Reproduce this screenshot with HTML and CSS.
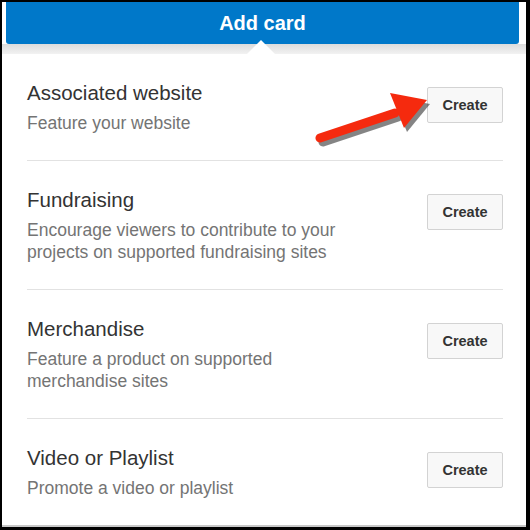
FILE: index.html
```html
<!DOCTYPE html>
<html lang="en">
<head>
    <meta charset="UTF-8">
    <title>Add card</title>
    <link rel="stylesheet" href="styles.css">
</head>
<body>
    <div class="frame">
        <div class="header">
            <h1>Add card</h1>
        </div>
        <div class="header-shadow">
            <span class="notch"></span>
        </div>

        <ul class="cards">
            <li class="card">
                <div class="card-text">
                    <div class="card-title">Associated website</div>
                    <div class="card-desc">Feature your website</div>
                </div>
                <button class="create-btn">Create</button>
            </li>
            <li class="card">
                <div class="card-text">
                    <div class="card-title">Fundraising</div>
                    <div class="card-desc">Encourage viewers to contribute to your<br>projects on supported fundraising sites</div>
                </div>
                <button class="create-btn">Create</button>
            </li>
            <li class="card">
                <div class="card-text">
                    <div class="card-title">Merchandise</div>
                    <div class="card-desc">Feature a product on supported<br>merchandise sites</div>
                </div>
                <button class="create-btn">Create</button>
            </li>
            <li class="card">
                <div class="card-text">
                    <div class="card-title">Video or Playlist</div>
                    <div class="card-desc">Promote a video or playlist</div>
                </div>
                <button class="create-btn">Create</button>
            </li>
        </ul>

        <!-- red callout arrow pointing at the first button -->
        <svg class="arrow" width="130" height="60" viewBox="0 0 130 60">
            <g transform="translate(3,4)" fill="#333" opacity="0.6">
                <path d="M5 46 L80 21" stroke="#333" stroke-width="9" stroke-linecap="round"/>
                <polygon points="75,1 112,8 89,36"/>
            </g>
            <path d="M5 46 L80 21" stroke="#f52a0e" stroke-width="9" stroke-linecap="round"/>
            <polygon points="75,1 112,8 89,36" fill="#f52a0e"/>
        </svg>
    </div>
</body>
</html>
```

FILE: styles.css
```css
* {
    margin: 0;
    padding: 0;
    box-sizing: border-box;
}

body {
    background: #000;
    width: 530px;
    height: 530px;
    padding: 2px 4px 3px 2px;
    font-family: 'Liberation Sans', Arial, sans-serif;
}

.frame {
    position: relative;
    background: #fff;
    height: 525px;
    border-bottom: 2px solid #c8c8c8;
}

.header {
    background: #0078c9;
    height: 42px;
    margin: 0 7px 0 4px;
    border-radius: 0 0 3px 3px;
    display: flex;
    align-items: center;
    justify-content: center;
}

.header h1 {
    color: #fff;
    font-size: 20px;
    font-weight: 700;
}

.header-shadow {
    height: 10px;
    background: linear-gradient(#dcdcdc, #f2f2f2);
    display: flex;
    justify-content: center;
    padding-right: 6px;
}

.notch {
    width: 0;
    height: 0;
    margin-top: -4px;
    border-left: 14px solid transparent;
    border-right: 14px solid transparent;
    border-bottom: 14px solid #fff;
}

.cards {
    list-style: none;
    padding: 0 23px 0 25px;
}

.card {
    display: flex;
    justify-content: space-between;
    align-items: flex-start;
    padding: 27px 0 26px;
    border-bottom: 1px solid #e2e2e2;
}

.card:last-child {
    border-bottom: none;
}

.card-title {
    font-size: 20.5px;
    line-height: 24px;
    color: #333;
}

.card-desc {
    margin-top: 7px;
    font-size: 17.5px;
    line-height: 22px;
    color: #747474;
}

.create-btn {
    margin-top: 6px;
    width: 76px;
    height: 36px;
    background: #f8f8f8;
    border: 1px solid #d3d3d3;
    border-radius: 2px;
    font-family: inherit;
    font-size: 14.5px;
    font-weight: 700;
    color: #333;
}

.arrow {
    position: absolute;
    left: 313px;
    top: 90px;
}
```
